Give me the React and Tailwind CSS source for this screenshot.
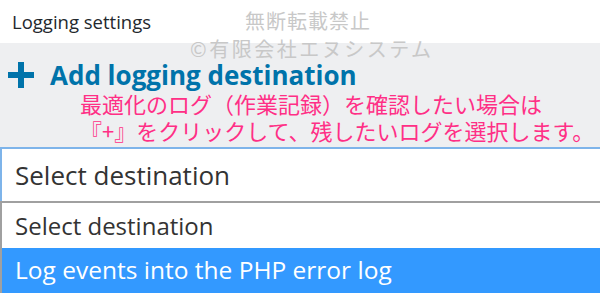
import React from 'react';

const ui = { fontFamily: '"Open Sans", "Noto Sans", sans-serif' };
const jp = { fontFamily: '"Noto Sans CJK JP", sans-serif' };

export default function App() {
  return (
    <div className="relative w-[600px] h-[295px] overflow-hidden bg-white" style={ui}>
      <div className="h-[43px] flex items-center pl-[12px] text-[18.5px] text-[#23282d]">Logging settings</div>
      <div className="bg-[#eeeff1] h-[104px] pt-[17px]">
        <div className="flex items-center pl-[8px] text-[#0073aa]">
          <svg width="26" height="26" viewBox="0 0 26 26" className="mr-[16px]">
            <rect x="10" y="0" width="6" height="26" fill="currentColor" />
            <rect x="0" y="10" width="26" height="6" fill="currentColor" />
          </svg>
          <span className="text-[26px] font-bold leading-[30px]">Add logging destination</span>
        </div>
        <div className="pl-[80px] text-[22px] leading-[27px] text-[#ff2f86] whitespace-pre" style={jp}>
          <div>最適化のログ（作業記録）を確認したい場合は</div>
          <div>『+』をクリックして、残したいログを選択します。</div>
        </div>
      </div>
      <div className="border-t-2 border-l-2 border-[#7eb4ea] h-[54px] flex items-center pl-[13px] text-[26px] text-[#333]">
        Select destination
      </div>
      <div className="border-t-2 border-l-2 border-[#a0a0a0]">
        <div className="h-[45px] flex items-center pl-[13px] text-[24px] text-[#333]">Select destination</div>
        <div className="h-[45px] flex items-center pl-[13px] text-[24.5px] text-white bg-[#3399ff]">Log events into the PHP error log</div>
      </div>
      <div className="absolute left-[245px] top-[6px] text-[20px] text-[#c8c8c8] tracking-[1px]" style={jp}>無断転載禁止</div>
      <div className="absolute left-[190px] top-[34px] text-[20px] text-[#c8c8c8] tracking-[2.5px]" style={jp}>©有限会社エヌシステム</div>
    </div>
  );
}
